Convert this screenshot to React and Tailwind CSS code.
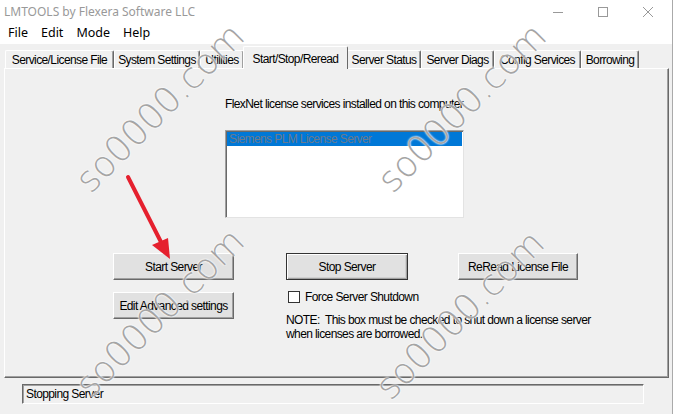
import React from "react";

const TABS = [
  { label: "Service/License File", w: "w-[109px]" },
  { label: "System Settings", w: "w-[86px]" },
  { label: "Utilities", w: "w-[44px]" },
  { label: "Start/Stop/Reread", w: "w-[105px]", active: true },
  { label: "Server Status", w: "w-[74px]" },
  { label: "Server Diags", w: "w-[73px]" },
  { label: "Config Services", w: "w-[87px]" },
  { label: "Borrowing", w: "w-[58px]" },
];

const WATERMARKS = [
  "left-[160px] top-[108px]",
  "left-[462px] top-[108px]",
  "left-[160px] top-[313px]",
  "left-[460px] top-[315px]",
];

const ui = "font-['Liberation_Sans',Arial,sans-serif] text-[12px] tracking-[-0.6px] text-black";

function Button({ children, isDefault }) {
  return (
    <div
      className={`h-[27px] flex items-center justify-center whitespace-nowrap bg-[#e1e1e1] border ${
        isDefault
          ? "border-[#333] shadow-[inset_1px_1px_0_#fff,inset_-1px_-1px_0_#a0a0a0,inset_-2px_-2px_0_#d0d0d0]"
          : "border-t-white border-l-white border-r-[#696969] border-b-[#696969] shadow-[inset_-1px_-1px_0_#a0a0a0]"
      }`}
    >
      {children}
    </div>
  );
}

export default function App() {
  return (
    <div className="relative w-[673px] h-[414px] overflow-hidden bg-[#f0f0f0] border-r border-[#aaa]">
      {/* title bar */}
      <div className="h-[23px] bg-white flex items-center justify-between pl-[4px] pr-[19px]">
        <span className="font-['Noto_Sans',sans-serif] text-[12px] text-[#999]">LMTOOLS by Flexera Software LLC</span>
        <div className="flex items-center gap-[35px] text-[#999]">
          <svg width="10" height="10" viewBox="0 0 10 10"><path d="M0 5.5H10" stroke="currentColor" /></svg>
          <svg width="10" height="10" viewBox="0 0 10 10"><rect x="0.5" y="0.5" width="9" height="9" fill="none" stroke="currentColor" /></svg>
          <svg width="10" height="10" viewBox="0 0 10 10"><path d="M0 0L10 10M10 0L0 10" stroke="currentColor" /></svg>
        </div>
      </div>

      {/* menu bar */}
      <div className="h-[21px] bg-white flex items-center gap-[13px] pl-[8px] font-['Noto_Sans',sans-serif] text-[12.5px] text-black">
        <span>File</span>
        <span>Edit</span>
        <span>Mode</span>
        <span>Help</span>
      </div>

      {/* tabs */}
      <div className={`mt-[2px] h-[22px] flex items-end pl-[5px] ${ui}`}>
        {TABS.map((t) =>
          t.active ? (
            <div
              key={t.label}
              className={`${t.w} relative z-10 h-[23px] -mb-[1px] -mx-[1px] flex items-start pt-[3px] justify-center bg-[#f0f0f0] border-t border-l border-r border-t-white border-l-white border-r-[#696969] rounded-t-[2px]`}
            >
              {t.label}
            </div>
          ) : (
            <div
              key={t.label}
              className={`${t.w} h-[18px] flex items-center justify-center bg-[#f0f0f0] border-t border-l border-r border-t-white border-l-white border-r-[#696969] shadow-[inset_-1px_0_0_#a0a0a0] rounded-t-[2px]`}
            >
              {t.label}
            </div>
          )
        )}
      </div>

      {/* tab panel */}
      <div className={`ml-[4px] w-[665px] h-[310px] border border-t-white border-l-white border-r-[#696969] border-b-[#696969] shadow-[inset_-1px_-1px_0_#a0a0a0] ${ui}`}>
        <div className="pl-[220px] pt-[28px]">
          <div className="h-[14px] leading-[14px]">FlexNet license services installed on this computer</div>
          <div className="mt-[19px] w-[239px] h-[88px] bg-white border border-t-[#a0a0a0] border-l-[#a0a0a0] border-r-[#e3e3e3] border-b-[#e3e3e3] shadow-[inset_1px_1px_0_#696969]">
            <div className="ml-[1px] mt-[1px] mr-[1px] h-[14px] leading-[14px] bg-[#0078d7] text-[#6a7a8c] pl-[2px]">Siemens PLM License Server</div>
          </div>
        </div>

        <div className="mt-[35px] pl-[108px] flex items-start">
          <div className="w-[121px] flex flex-col gap-[12px]">
            <Button>Start Server</Button>
            <Button>Edit Advanced settings</Button>
          </div>
          <div className="ml-[52px] w-[122px] flex flex-col">
            <Button isDefault>Stop Server</Button>
            <div className="mt-[8px] ml-[2px] flex items-center gap-[5px] whitespace-nowrap">
              <div className="w-[12px] h-[12px] shrink-0 bg-white border border-[#333]" />
              <span>Force Server Shutdown</span>
            </div>
            <div className="mt-[7px] whitespace-nowrap leading-[14px]">
              NOTE:&nbsp; This box must be checked to shut down a license server
              <br />
              when licenses are borrowed.
            </div>
          </div>
          <div className="ml-[50px] w-[120px]">
            <Button>ReRead License File</Button>
          </div>
        </div>
      </div>

      {/* status bar */}
      <div className={`mt-[6px] ml-[22px] w-[622px] h-[20px] flex items-center pl-[3px] border border-t-[#696969] border-l-[#696969] border-r-white border-b-white shadow-[inset_1px_1px_0_#a0a0a0] ${ui}`}>
        Stopping Server
      </div>

      {/* red arrow annotation */}
      <svg className="absolute left-0 top-0 pointer-events-none" width="673" height="414">
        <line x1="128" y1="177" x2="162" y2="244" stroke="#e5202e" strokeWidth="4" strokeLinecap="round" />
        <polygon points="170,259 152,245 168,238" fill="#e5202e" />
      </svg>

      {/* watermarks */}
      {WATERMARKS.map((pos) => (
        <div
          key={pos}
          className={`absolute ${pos} -translate-x-1/2 -translate-y-1/2 -rotate-45 pointer-events-none whitespace-nowrap font-['DejaVu_Sans',sans-serif] font-extralight text-[36px] leading-none text-[#a5a5a5] [text-shadow:0_0_2px_#fff,0_0_2px_#fff]`}
        >
          so0000.com
        </div>
      ))}
    </div>
  );
}
